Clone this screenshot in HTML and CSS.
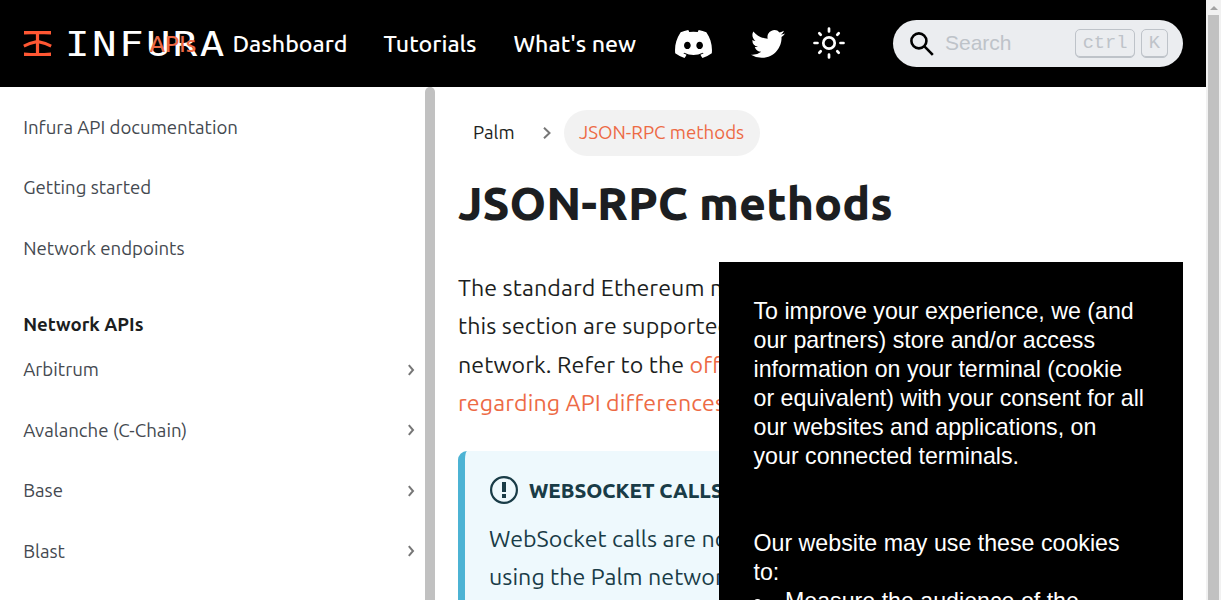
FILE: index.html
```html
<!DOCTYPE html>
<html lang="en">
<head>
<meta charset="utf-8">
<title>JSON-RPC methods | Infura</title>
<link rel="stylesheet" href="styles.css">
</head>
<body>
<div class="page">
  <header class="navbar">
    <a class="brand">
      <svg class="brand-mark" viewBox="0 0 30 26" width="30" height="26" fill="#ff5733"><path d="M1 0H28V3.6Q14.500 2.200 1 3.600ZM1 25V21.400Q14.500 22.800 28 21.400V25ZM12.900 2H16.100V9.200Q23 10.600 28.800 13.800L27.500 16.600Q22 13.500 16.100 12.400V23H12.900V12.400Q7 13.500 1.500 16.600L.2 13.800Q6 10.600 12.900 9.200Z"/></svg>
      <span class="wordmark">INFURA</span>
    </a>
    <nav class="links">
      <a class="apis">APIs</a>
      <a class="dashboard">Dashboard</a>
      <a class="tutorials">Tutorials</a>
      <a class="news">What's new</a>
    </nav>
    <div class="icons">
      <svg class="discord" viewBox="0 0 127.140 96.360" width="37" height="28" fill="#fff"><path d="M107.700 8.070A105.150 105.150 0 0 0 81.470 0a72.060 72.060 0 0 0-3.360 6.830 97.680 97.680 0 0 0-29.110 0A72.370 72.370 0 0 0 45.640 0a105.890 105.890 0 0 0-26.250 8.090C2.790 32.650-1.710 56.600.54 80.210a105.730 105.730 0 0 0 32.170 16.150 77.700 77.700 0 0 0 6.890-11.110 68.420 68.420 0 0 1-10.850-5.180c.91-.66 1.800-1.340 2.660-2a75.570 75.570 0 0 0 64.320 0c.87.71 1.760 1.390 2.660 2a68.680 68.680 0 0 1-10.870 5.190 77 77 0 0 0 6.890 11.100 105.250 105.250 0 0 0 32.190-16.140c2.640-27.380-4.510-51.110-18.900-72.150ZM42.450 65.690c-6.270 0-11.450-5.690-11.450-12.690s5-12.740 11.430-12.740S54 46 53.890 53s-5.050 12.690-11.440 12.690Zm42.240 0c-6.280 0-11.440-5.690-11.440-12.690s5-12.740 11.440-12.740S96.230 46 96.120 53s-5.040 12.690-11.430 12.690Z"/></svg>
      <svg class="twitter" viewBox="0 0 24 24" width="34" height="34" fill="#fff"><path d="M23.953 4.570a10 10 0 0 1-2.825.775 4.958 4.958 0 0 0 2.163-2.723c-.951.555-2.005.959-3.127 1.184a4.920 4.920 0 0 0-8.384 4.482C7.690 8.095 4.067 6.130 1.640 3.162a4.822 4.822 0 0 0-.666 2.475c0 1.710.870 3.213 2.188 4.096a4.904 4.904 0 0 1-2.228-.616v.060a4.923 4.923 0 0 0 3.946 4.827 4.996 4.996 0 0 1-2.212.085 4.936 4.936 0 0 0 4.604 3.417 9.867 9.867 0 0 1-6.102 2.105c-.390 0-.779-.023-1.170-.067a13.995 13.995 0 0 0 7.557 2.209c9.053 0 13.998-7.496 13.998-13.985 0-.210 0-.420-.015-.630A9.935 9.935 0 0 0 24 4.590z"/></svg>
      <svg class="sun" viewBox="0 0 32 32" width="32" height="32" fill="none" stroke="#fff" stroke-width="2.700" stroke-linecap="round"><circle cx="16" cy="16" r="5.700"/><path d="M16 1.500V4.500M16 27.500V30.500M1.500 16H4.500M27.500 16H30.500M6.300 6.300L7.700 7.700M24.300 24.300L25.700 25.700M6.300 25.700L7.700 24.300M24.300 7.700L25.700 6.300"/></svg>
    </div>
    <div class="search">
      <svg viewBox="0 0 24 24" width="24" height="24" fill="none" stroke="#000" stroke-width="2.600"><circle cx="8.900" cy="8.900" r="7.500"/><path d="M14.200 14.200L22.800 22.800"/></svg>
      <span class="placeholder">Search</span>
      <kbd>ctrl</kbd><kbd>K</kbd>
    </div>
  </header>
  <div class="layout">
    <aside class="sidebar">
      <ul class="menu">
        <li><a>Infura API documentation</a></li>
        <li><a>Getting started</a></li>
        <li><a>Network endpoints</a></li>
        <li class="heading">Network APIs</li>
        <li><a>Arbitrum</a><svg viewBox="0 0 8 12" width="8" height="12"><path d="M1.800 1.200L6 6L1.800 10.800"/></svg></li>
        <li><a>Avalanche (C-Chain)</a><svg viewBox="0 0 8 12" width="8" height="12"><path d="M1.800 1.200L6 6L1.800 10.800"/></svg></li>
        <li><a>Base</a><svg viewBox="0 0 8 12" width="8" height="12"><path d="M1.800 1.200L6 6L1.800 10.800"/></svg></li>
        <li><a>Blast</a><svg viewBox="0 0 8 12" width="8" height="12"><path d="M1.800 1.200L6 6L1.800 10.800"/></svg></li>
      </ul>
      <div class="sidebar-thumb"></div>
    </aside>
    <main class="content">
      <div class="crumbs">
        <span class="palm">Palm</span>
        <svg viewBox="0 0 10 14" width="10" height="14"><path d="M2 1.800L7.500 7L2 12.200"/></svg>
        <span class="current">JSON-RPC methods</span>
      </div>
      <h1>JSON-RPC methods</h1>
      <p class="intro">The standard Ethereum methods<br>this section are supported<br>network. Refer to the <a>official</a><br><a>regarding API differences</a>.</p>
      <section class="note">
        <div class="note-title"><svg viewBox="0 0 28 28" width="28" height="28"><circle cx="14" cy="14" r="12.900" fill="none" stroke="#193c47" stroke-width="2.200"/><path d="M12 6H16V16H12ZM12 18H16V22H12Z" fill="#193c47"/></svg><span>WEBSOCKET CALLS</span></div>
        <p>WebSocket calls are not<br>using the Palm network</p>
      </section>
    </main>
  </div>
  <aside class="cookies">
    <p>To improve your experience, we (and<br>our partners) store and/or access<br>information on your terminal (cookie<br>or equivalent) with your consent for all<br>our websites and applications, on<br>your connected terminals.</p>
    <p>Our website may use these cookies<br>to:</p>
    <ul><li>Measure the audience of the</li></ul>
  </aside>
</div>
<div class="scrollbar"><i class="up"></i><i class="thumb"></i></div>
</body>
</html>
```
FILE: styles.css
```css
* { box-sizing: border-box; }
body { margin: 0; height: 600px; overflow: hidden; display: grid; grid-template-columns: 1206px 15px; background: #fff; color: #1c1e21; font-family: Ubuntu, "Noto Sans", sans-serif; font-weight: 425; }
p, h1, ul { margin: 0; padding: 0; }
ul { list-style: none; }
.page { position: relative; height: 600px; overflow: hidden; }

.navbar { height: 87px; background: #000; display: flex; align-items: center; padding: 0 23px; color: #fff; }
.brand { display: flex; align-items: center; width: 126.500px; flex: none; }
.brand-mark { flex: none; }
.wordmark { margin-left: 12px; font: 34px/40px "DejaVu Sans Mono", monospace; letter-spacing: 2px; white-space: nowrap; transform: scaleX(1.2); transform-origin: left; }
.links { display: flex; flex: none; width: 525px; margin-top: -2px; font-size: 23.200px; font-weight: 540; line-height: 30px; white-space: nowrap; position: relative; }
.links a { flex: none; }
.apis { width: 83px; color: #ed6a45; }
.dashboard { width: 151px; }
.tutorials { width: 130px; }
.icons { display: flex; align-items: center; width: 218.500px; flex: none; margin-top: -1px; }
.discord { margin-top: 2px; }
.twitter { margin: 2px 0 0 39px; }
.sun { margin-left: 28px; }
.search { width: 290px; height: 47px; border-radius: 24px; background: #ebedf0; display: flex; align-items: center; padding: 0 15px 0 17px; flex: none; }
.placeholder { margin: -2px auto 0 11px; color: #bec3c9; font: 21px/24px "Liberation Sans", sans-serif; }
kbd { height: 29px; margin-left: 6px; padding: 0 6.300px; border: 1px solid #bec3c9; border-radius: 5px; box-shadow: inset 0 -1px 0 #bec3c9; color: #bec3c9; font: 18.700px/26px "Liberation Mono", monospace; }
kbd:last-child { padding: 0 7px; }

.layout { display: flex; height: 513px; }
.sidebar { width: 435px; display: flex; justify-content: space-between; flex: none; }
.menu { width: 425px; padding: 10px 10.500px 0 23.200px; font-size: 18.650px; color: #444950; }
.menu li { height: 60.500px; display: flex; align-items: center; justify-content: space-between; }
.menu .heading { height: 61px; padding-top: 30px; color: #1c1e21; font-weight: 580; }
.menu svg, .crumbs svg { fill: none; stroke: #777; stroke-width: 2; }
.sidebar-thumb { width: 10px; height: 540px; border-radius: 5px 5px 0 0; background: #c1c1c1; }
.content { padding: 23px 23px 0; width: 771px; flex: none; white-space: nowrap; }
.crumbs { display: flex; align-items: center; height: 46px; font-size: 18.700px; }
.palm { width: 69px; padding-left: 15px; line-height: 20px; margin-top: -1px; }
.crumbs svg { margin: 0 12px 0 15px; }
.current { width: 196px; height: 46px; padding-left: 15px; border-radius: 23px; background: #f2f2f2; color: #ed6a45; line-height: 45px; }
h1 { margin-top: 18px; font-size: 46.400px; line-height: 58px; font-weight: 800; }
.intro { margin-top: 36px; font-size: 23.200px; letter-spacing: .09px; line-height: 38.400px; }
.intro a { color: #ed6a45; }
.note { margin-top: 29px; height: 180px; border-left: 7px solid #4cb3d4; border-radius: 9px; background: #eef9fd; color: #193c47; padding: 24px; font-size: 23.200px; letter-spacing: .05px; line-height: 38.400px; }
.note-title { display: flex; align-items: center; height: 32px; font-size: 20.400px; letter-spacing: 0; font-weight: 800; margin-bottom: 12px; }
.note-title svg { margin: -1px 11px 0 1px; }
.note-title span { padding-top: 1px; }

.cookies { position: absolute; left: 719px; top: 262px; width: 464px; height: 338px; overflow: hidden; padding: 35px 34.500px 0; background: #000; color: #fff; font: 23.200px/29px "Liberation Sans", sans-serif; white-space: nowrap; }
.cookies p + p { margin-top: 58px; }
.cookies li { display: flex; }
.cookies li::before { content: ""; width: 7px; height: 7px; margin: 12px 24.500px 0 0; border-radius: 50%; background: #fff; }

.scrollbar { background: #f1f1f1; display: flex; flex-direction: column; align-items: center; }
.up { margin-top: 6px; border: 4px solid transparent; border-top: 0; border-bottom: 4px solid #a3a3a3; }
.thumb { width: 11px; height: 590px; margin-top: 5px; background: #c1c1c1; }
```
